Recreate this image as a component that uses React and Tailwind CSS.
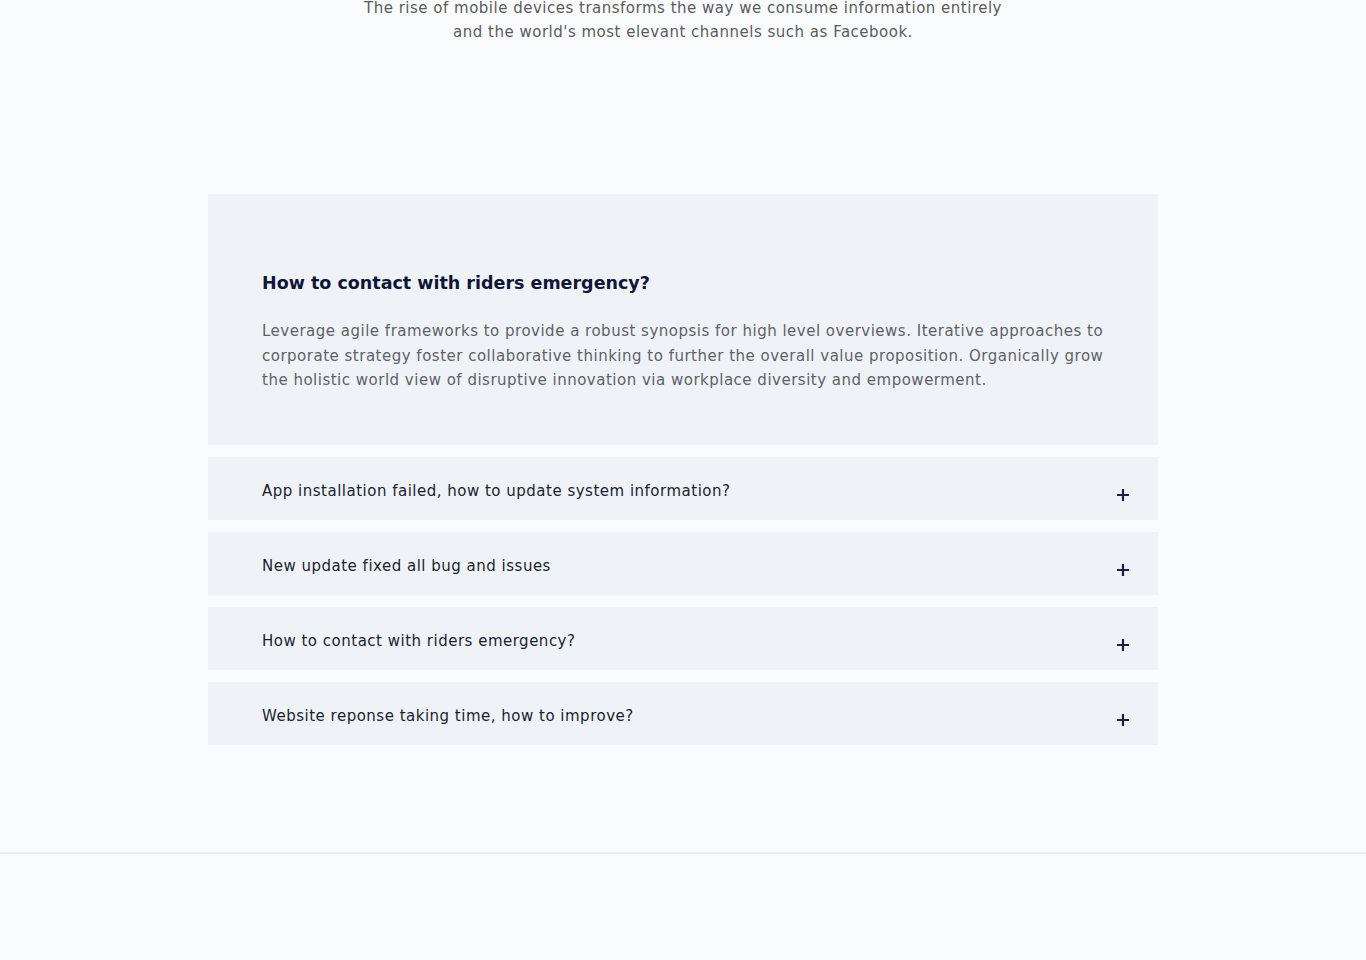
import React, { useState } from 'react';

const faqs = [
    {
        q: 'How to contact with riders emergency?',
        a: 'Leverage agile frameworks to provide a robust synopsis for high level overviews. Iterative approaches to corporate strategy foster collaborative thinking to further the overall value proposition. Organically grow the holistic world view of disruptive innovation via workplace diversity and empowerment.',
    },
    { q: 'App installation failed, how to update system information?', a: '' },
    { q: 'New update fixed all bug and issues', a: '' },
    { q: 'How to contact with riders emergency?', a: '' },
    { q: 'Website reponse taking time, how to improve?', a: '' },
];

function Plus() {
    return (
        <svg width="14" height="14" viewBox="0 0 14 14" className="shrink-0 mt-[9px]">
            <path d="M7 1v12M1 7h12" stroke="#1b1f3b" strokeWidth="2.2" />
        </svg>
    );
}

export default function App() {
    const [open, setOpen] = useState(0);

    return (
        <div className="min-h-[960px] bg-[#fafbfd] font-['DejaVu_Sans',sans-serif] pt-px">
            {/* Intro */}
            <p className="-mt-[5px] text-center text-[15px] tracking-[0.5px] leading-[24px] text-[#5b5b5b]">
                The rise of mobile devices transforms the way we consume information entirely
                <br />
                and the world's most elevant channels such as Facebook.
            </p>

            {/* FAQ */}
            <div className="w-[950px] mx-auto mt-[150px] flex flex-col gap-[12px]">
                {faqs.map((f, i) =>
                    open === i ? (
                        <div key={i} className="bg-[#eff3f7] pl-[54px] pr-[46px] pt-[77px] pb-[52px]">
                            <h3 className="text-[17.5px] leading-[24px] font-bold text-[#0f1638]">{f.q}</h3>
                            <p className="mt-[24px] text-[15px] tracking-[0.5px] leading-[24.5px] text-[#5f6166]">{f.a}</p>
                        </div>
                    ) : (
                        <button
                            key={i}
                            onClick={() => setOpen(i)}
                            className="h-[63px] bg-[#eff3f7] pl-[54px] pr-[28px] flex items-start justify-between text-left pt-[22px]"
                        >
                            <span className="text-[15px] tracking-[0.5px] leading-[24px] text-[#1a1f30]">{f.q}</span>
                            <Plus />
                        </button>
                    )
                )}
            </div>

            <div className="mt-[107px] h-[2px] bg-[#ebedf0]" />
        </div>
    );
}
